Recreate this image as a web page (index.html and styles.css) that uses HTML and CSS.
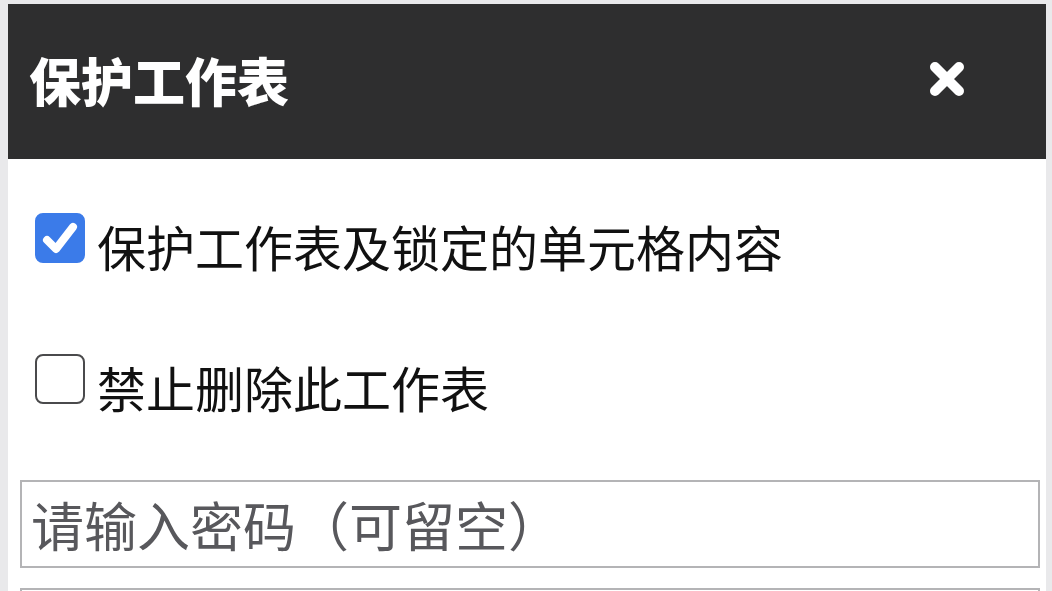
FILE: index.html
```html
<!DOCTYPE html>
<html lang="zh-CN">
<head>
    <meta charset="UTF-8">
    <meta name="viewport" content="width=device-width, initial-scale=1.0">
    <title>保护工作表</title>
    <link rel="stylesheet" href="styles.css">
</head>
<body>
    <div class="dialog">
        <div class="header">
            <div class="title">保护工作表</div>
            <button class="close" aria-label="关闭">
                <svg width="36" height="36" viewBox="0 0 36 36">
                    <path d="M6 6 L30 30 M30 6 L6 30" stroke="#fff" stroke-width="10" stroke-linecap="round" fill="none"/>
                </svg>
            </button>
        </div>
        <div class="content">
            <label class="option">
                <span class="box checked">
                    <svg width="50" height="50" viewBox="0 0 50 50">
                        <path d="M12 27 L21 36 L38 14" stroke="#fff" stroke-width="8" stroke-linecap="round" stroke-linejoin="round" fill="none"/>
                    </svg>
                </span>
                <span class="label">保护工作表及锁定的单元格内容</span>
            </label>
            <label class="option">
                <span class="box"></span>
                <span class="label">禁止删除此工作表</span>
            </label>
            <input class="field first" type="password" placeholder="请输入密码（可留空）">
            <input class="field" type="password" placeholder="再次输入密码">
        </div>
    </div>
</body>
</html>
```

FILE: styles.css
```css
body {
    margin: 0;
    background-color: #e9e9eb;
    font-family: "Noto Sans CJK SC", "Noto Sans", sans-serif;
    overflow: hidden;
}
.dialog {
    margin: 4px 6px 0 8px;
    background-color: #fff;
    height: calc(100vh - 4px);
    overflow: hidden;
}
.header {
    height: 155px;
    background-color: #2e2e2f;
    display: flex;
    align-items: center;
    justify-content: space-between;
    padding: 0 81px 0 21px;
}
.title {
    color: #fff;
    font-size: 52px;
    font-weight: 900;
    margin-top: -4px;
}
.close {
    background: none;
    border: none;
    padding: 0;
    width: 36px;
    height: 36px;
    margin-top: -6px;
    cursor: pointer;
}
.close svg {
    display: block;
}
.content {
    padding: 53px 6px 0 12px;
    display: flex;
    flex-direction: column;
}
.option {
    display: flex;
    align-items: center;
    gap: 12px;
    margin-left: 15px;
    height: 51px;
}
.option + .option {
    margin-top: 90px;
}
.box {
    width: 46px;
    height: 46px;
    border: 2px solid #4a4a4c;
    border-radius: 8px;
    flex-shrink: 0;
    position: relative;
}
.box.checked {
    background-color: #3b7be9;
    border-color: #3b7be9;
}
.box svg {
    position: absolute;
    left: -2px;
    top: -2px;
}
.label {
    font-size: 49px;
    color: #111;
    margin-top: 16px;
    line-height: 1;
}
.field {
    box-sizing: border-box;
    height: 88px;
    border: 2px solid #b4b4b6;
    background: #fff;
    padding: 0 9px;
    font-family: inherit;
    font-size: 53px;
    outline: none;
    flex-shrink: 0;
}
.field::placeholder {
    color: #58585c;
}
.first {
    margin-top: 76px;
}
.field + .field {
    margin-top: 20px;
}
```
